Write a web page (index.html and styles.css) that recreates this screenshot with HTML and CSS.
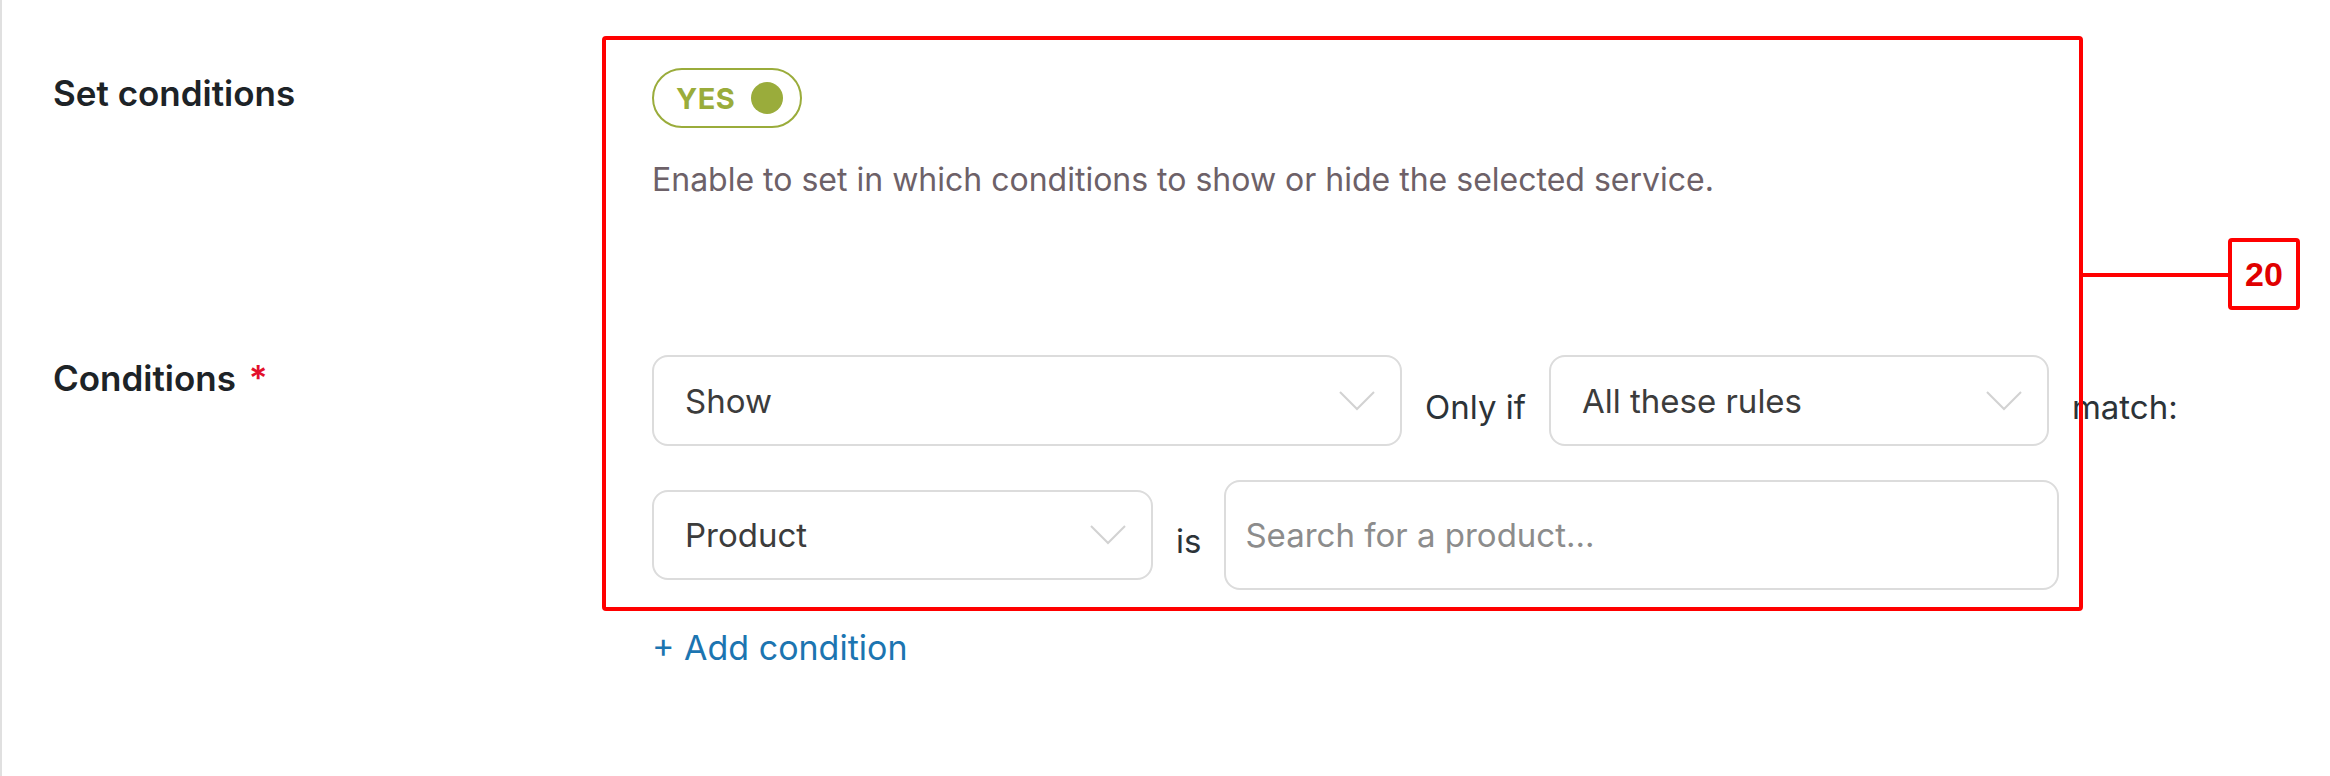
FILE: index.html
```html
<!DOCTYPE html>
<html lang="en">

<head>
    <meta charset="UTF-8">
    <meta name="viewport" content="width=device-width, initial-scale=1.0">
    <title>Set conditions</title>
    <link rel="stylesheet" href="styles.css">
</head>

<body>
    <div class="page">
        <div class="form">
            <!-- toggle row -->
            <div class="row row-toggle">
                <div class="label">Set conditions</div>
                <div class="field">
                    <span class="toggle">
                        <span class="toggle-text">YES</span>
                        <span class="toggle-knob"></span>
                    </span>
                    <p class="desc">Enable to set in which conditions to show or hide the selected service.</p>
                </div>
            </div>

            <!-- conditions row -->
            <div class="row row-conditions">
                <div class="label">Conditions <span class="req">*</span></div>
                <div class="field">
                    <div class="cond-line">
                        <div class="select select-action">
                            <span>Show</span>
                            <svg class="chevron" width="36" height="20" viewBox="0 0 36 20"><polyline points="1,1 18,18 35,1" fill="none" stroke="#d2d2d2" stroke-width="2"/></svg>
                        </div>
                        <span class="word">Only if</span>
                        <div class="select select-match">
                            <span>All these rules</span>
                            <svg class="chevron" width="36" height="20" viewBox="0 0 36 20"><polyline points="1,1 18,18 35,1" fill="none" stroke="#d2d2d2" stroke-width="2"/></svg>
                        </div>
                        <span class="word">match:</span>
                    </div>
                    <div class="cond-line cond-rule">
                        <div class="select select-type">
                            <span>Product</span>
                            <svg class="chevron" width="36" height="20" viewBox="0 0 36 20"><polyline points="1,1 18,18 35,1" fill="none" stroke="#d2d2d2" stroke-width="2"/></svg>
                        </div>
                        <span class="word">is</span>
                        <div class="search">Search for a product...</div>
                    </div>
                    <a class="add-link" href="#">+ Add condition</a>
                </div>
            </div>
        </div>

        <!-- annotation overlay -->
        <div class="mark-box"></div>
        <div class="mark-line"></div>
        <div class="mark-tag">20</div>
    </div>
</body>

</html>
```

FILE: styles.css
```css
body {
    margin: 0;
    background-color: #fff;
    font-family: Inter, "Noto Sans", sans-serif;
}

.page {
    position: relative;
    min-height: 776px;
    border-left: 2px solid #e0e0e0;
}

.form {
    padding-left: 51px;
}

.row {
    display: grid;
    grid-template-columns: 599px 1fr;
}

.row-toggle {
    padding-top: 68px;
}

.row-conditions {
    margin-top: 155px;
}

.label {
    font-size: 35px;
    font-weight: 600;
    line-height: 42px;
    color: #1d2327;
}

.row-toggle .label {
    padding-top: 4px;
}

.row-conditions .label {
    padding-top: 2px;
}

.req {
    color: #e3102c;
    margin-left: 4px;
}

/* toggle */
.toggle {
    display: inline-flex;
    align-items: center;
    box-sizing: border-box;
    width: 150px;
    height: 60px;
    padding-left: 22px;
    border: 2px solid #9aac3b;
    border-radius: 30px;
}

.toggle-text {
    font-size: 29px;
    font-weight: 700;
    letter-spacing: 0.5px;
    color: #9aac3b;
}

.toggle-knob {
    width: 32px;
    height: 32px;
    margin-left: 16px;
    border-radius: 50%;
    background-color: #9aac3b;
}

.desc {
    margin: 32px 0 0;
    font-size: 32px;
    line-height: 40px;
    color: #6d6168;
}

/* condition lines */
.cond-line {
    display: flex;
    align-items: center;
    gap: 23px;
}

.cond-rule {
    margin-top: 34px;
}

.select {
    display: flex;
    align-items: center;
    justify-content: space-between;
    box-sizing: border-box;
    height: 91px;
    padding: 0 25px 0 31px;
    border: 2px solid #dcdcdc;
    border-radius: 16px;
    font-size: 33px;
    color: #3c3c3c;
}

.select-action {
    width: 750px;
}

.select-match {
    width: 500px;
}

.select-type {
    width: 501px;
    height: 90px;
}

.chevron {
    display: block;
}

.word {
    font-size: 33px;
    color: #2c3338;
    padding-top: 12px;
}

.search {
    display: flex;
    align-items: center;
    box-sizing: border-box;
    width: 835px;
    height: 110px;
    padding-left: 19px;
    border: 2px solid #dcdcdc;
    border-radius: 16px;
    font-size: 33px;
    color: #8c8c8c;
}

.add-link {
    display: inline-block;
    margin-top: 37px;
    font-size: 34px;
    line-height: 41px;
    color: #1c75b1;
    text-decoration: none;
}

/* annotation */
.mark-box {
    position: absolute;
    left: 600px;
    top: 36px;
    width: 1481px;
    height: 575px;
    box-sizing: border-box;
    border: 4px solid #f00;
    border-radius: 4px;
}

.mark-line {
    position: absolute;
    left: 2078px;
    top: 273px;
    width: 150px;
    height: 4px;
    background-color: #f00;
}

.mark-tag {
    position: absolute;
    left: 2226px;
    top: 238px;
    width: 72px;
    height: 72px;
    box-sizing: border-box;
    border: 4px solid #f00;
    border-radius: 4px;
    display: flex;
    align-items: center;
    justify-content: center;
    font-family: "Liberation Sans", Arial, sans-serif;
    font-size: 34px;
    font-weight: 700;
    color: #e00000;
}
```
